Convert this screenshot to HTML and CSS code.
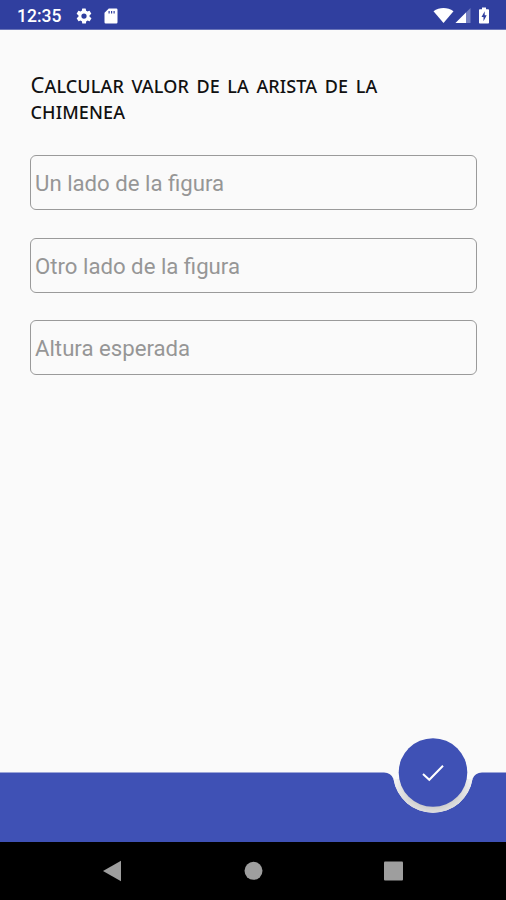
FILE: index.html
```html
<!DOCTYPE html>
<html lang="es">
<head>
<meta charset="utf-8">
<title>Calcular</title>
<link rel="stylesheet" href="styles.css">
</head>
<body>
<div class="screen">
  <header class="status">
    <span class="clock">12:35</span>
    <svg class="gear" width="18" height="18" viewBox="0 0 24 24"><path fill="#fff" fill-rule="evenodd" d="M19.4 13a7.500 7.500 0 0 0 0-2l2.100-1.600a.5.5 0 0 0 .1-.6l-2-3.500a.5.5 0 0 0-.6-.2l-2.500 1a7.300 7.300 0 0 0-1.700-1l-.4-2.600A.5.5 0 0 0 14 2h-4a.5.5 0 0 0-.5.4l-.4 2.700a7.300 7.300 0 0 0-1.700 1l-2.500-1a.5.5 0 0 0-.6.2l-2 3.500a.5.5 0 0 0 .1.600L4.600 11a7.500 7.500 0 0 0 0 2l-2.100 1.600a.5.5 0 0 0-.1.600l2 3.500a.5.5 0 0 0 .6.200l2.500-1a7.300 7.300 0 0 0 1.700 1l.4 2.700a.5.5 0 0 0 .5.400h4a.5.5 0 0 0 .5-.4l.4-2.700a7.300 7.300 0 0 0 1.700-1l2.500 1a.5.5 0 0 0 .6-.2l2-3.500a.5.5 0 0 0-.1-.6zM12 15.500a3.500 3.500 0 1 1 0-7 3.500 3.500 0 0 1 0 7z"/></svg>
    <svg class="card" width="14" height="16" viewBox="0 0 14 16"><path fill="#fff" fill-rule="evenodd" d="M4.800.5H12.300a1.200 1.200 0 0 1 1.200 1.200v12.600a1.200 1.200 0 0 1-1.200 1.200H1.700a1.200 1.200 0 0 1-1.200-1.200V4.800zM4.500 3v2.600h1.200V3zM7 3v2.600h1.200V3zM9.500 3v2.600h1.200V3z"/></svg>
    <svg class="signals" width="58" height="20" viewBox="0 0 58 20">
      <path fill="#fff" d="M.5 5.200C6.500.9 14.500.9 20.500 5.200L10.500 17z"/>
      <path fill="#7580c2" d="M37.500 2v15H22.500z"/>
      <path fill="#fff" d="M33 6.500V17H22.500z"/>
      <path fill="#fff" d="M49 1.500h4v1.700h2.200c.5 0 .8.300.8.800v12.700c0 .5-.3.800-.8.800h-8.400c-.5 0-.8-.3-.8-.8V4c0-.5.300-.8.800-.8H49z"/>
      <path fill="#303f9f" d="M51.700 5.200l-3.200 5.900h2v4.200l3.200-6h-2z"/>
    </svg>
  </header>
  <main class="content">
    <h1 class="title">Calcular valor de la arista de la<br>chimenea</h1>
    <input class="field" type="text" placeholder="Un lado de la figura">
    <input class="field" type="text" placeholder="Otro lado de la figura">
    <input class="field" type="text" placeholder="Altura esperada">
  </main>
  <footer class="bar">
    <svg width="506" height="112" viewBox="0 730 506 112">
      <defs>
        <filter id="soft" x="-30%" y="-30%" width="160%" height="160%"><feGaussianBlur stdDeviation="2.500"/></filter>
        <linearGradient id="shade" x1="0" y1="779" x2="0" y2="813" gradientUnits="userSpaceOnUse"><stop offset="0" stop-color="#f4f4f4"/><stop offset=".6" stop-color="#dedede"/></linearGradient>
        <clipPath id="below"><path d="M380 779H486V830H380z"/></clipPath>
      </defs>
      <path fill="#3f51b5" d="M0 772.500H384Q391 772.500 393.500 779A40 40 0 0 0 472.500 779Q475 772.500 482 772.500H506V842H0z"/>
      <path fill="url(#shade)" d="M393.500 779A40 40 0 0 0 472.500 779L466 779H400z"/>
      <circle cx="433" cy="776" r="33" fill="#aaa" opacity=".4" filter="url(#soft)" clip-path="url(#below)"/>
      <circle cx="433" cy="772.500" r="34.300" fill="#3f51b5"/>
      <path d="M423 774L429.300 779.800L443 765.800" fill="none" stroke="#fff" stroke-width="2"/>
    </svg>
  </footer>
  <nav class="nav">
    <svg width="506" height="58" viewBox="0 842 506 58" fill="#9e9e9e">
      <path d="M103 871L121 860.800V881.200z"/>
      <circle cx="253.500" cy="870.800" r="9"/>
      <rect x="384" y="861.500" width="19" height="19" rx="1"/>
    </svg>
  </nav>
</div>
</body>
</html>
```
FILE: styles.css
```css
* { box-sizing: border-box; }
body { margin: 0; }
svg { display: block; }
.screen {
  width: 506px;
  height: 900px;
  display: flex;
  flex-direction: column;
  background: #fafafa;
  font-family: Roboto, sans-serif;
}
.status {
  height: 30px;
  flex: none;
  display: flex;
  align-items: center;
  padding: 2px 15px 0 17px;
  background: #303f9f;
  border-bottom: 1px solid #6a74b8;
  color: #fff;
}
.clock { width: 58px; font-size: 17.5px; font-weight: 500; }
.card { margin-left: 11px; }
.signals { margin-left: auto; }
.content {
  flex: 1;
  min-height: 0;
  padding: 41px 29px 0 30px;
}
.title {
  margin: 0 0 30px;
  padding-left: 0.5px;
  font: 500 18px/26px "Noto Sans", sans-serif;
  color: #111;
  text-transform: uppercase;
  letter-spacing: 0.12px;
  word-spacing: 2.7px;
}
.title::first-letter { font-size: 22px; line-height: 26px; font-weight: 400; }
.field {
  display: block;
  width: 447px;
  height: 55px;
  margin: 0 0 27.500px;
  padding: 1px 4px 0;
  border: 1.500px solid #9a9a9a;
  border-radius: 6px;
  background: transparent;
  font: 400 22.200px Roboto, sans-serif;
}
.field::placeholder { color: #969696; opacity: 1; }
.bar { height: 112px; flex: none; }
.nav { height: 58px; flex: none; background: #000; }
```
